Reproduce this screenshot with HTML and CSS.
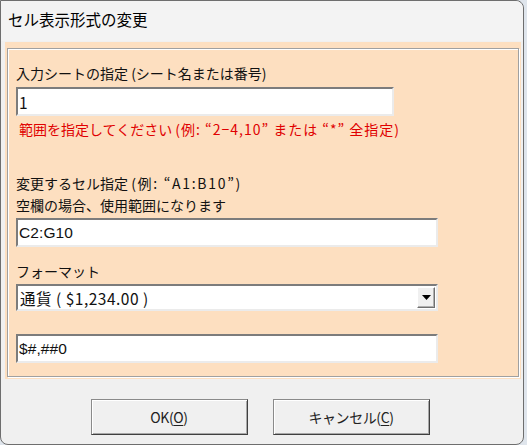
FILE: index.html
```html
<!DOCTYPE html>
<html lang="ja">
<head>
<meta charset="utf-8">
<link rel="stylesheet" href="styles.css">
</head>
<body>
<div class="window">
  <div class="titlebar">セル表示形式の変更</div>
  <div class="frame">
    <div class="group">
      <div class="label l1">入力シートの指定 (シート名または番号)</div>
      <div class="input w-short"><span class="val big">1</span></div>
      <div class="label note">範囲を指定してください <span class="lat-a">(例: “2−4,10” または “*” 全指定)</span></div>
      <div class="label l2">変更するセル指定 <span class="lat-b">(例: “A1:B10”)</span></div>
      <div class="label l3">空欄の場合、使用範囲になります</div>
      <div class="input w-long"><span class="val">C2:G10</span></div>
      <div class="label l4">フォーマット</div>
      <div class="combo w-long">
        <span class="val big wide">通貨 ( $1,234.00 )</span>
        <span class="drop"><svg width="9" height="5" viewBox="0 0 9 5"><path d="M0 0H9L4.5 5Z" fill="#000"/></svg></span>
      </div>
      <div class="input w-long i3"><span class="val">$#,##0</span></div>
    </div>
  </div>
  <div class="buttons">
    <div class="btn btn-ok">OK(<u>O</u>)</div>
    <div class="btn btn-cancel">キャンセル(<u>C</u>)</div>
  </div>
</div>
</body>
</html>
```

FILE: styles.css
```css
html, body {
  margin: 0;
  padding: 0;
}
body {
  width: 527px;
  height: 445px;
  background: #dfe5ec;
  font-family: "Noto Sans CJK JP", "Noto Sans", sans-serif;
  color: #000;
  overflow: hidden;
}
.window {
  box-sizing: border-box;
  width: 524px;
  height: 445px;
  background: #f0f0f0;
  border: 1px solid #6e6e6e;
  border-radius: 0 8px 8px 8px;
  display: flex;
  flex-direction: column;
}
.titlebar {
  height: 40px;
  line-height: 36px;
  padding-left: 7px;
  font-size: 15.5px;
  background: #f3f3f3;
  border-radius: 0 8px 0 0;
}
.frame {
  margin: 1px 2px 0 4px;
  height: 337px;
  box-sizing: border-box;
  padding: 6px 2px 2px 2px;
  background: #fddfc0;
}
.group {
  box-sizing: border-box;
  height: 329px;
  border: 1px solid #a0a0a0;
  box-shadow: inset 1px 1px 0 #fff, 1px 1px 0 #fff;
  padding: 14px 8px 0 8px;
  display: flex;
  flex-direction: column;
  align-items: flex-start;
}
.label {
  font-size: 14px;
  line-height: 20px;
  white-space: nowrap;
  color: #111;
}
.l1 { margin-bottom: 4px; }
.note {
  color: #e00000;
  margin: 3px 0 0 3px;
}
.lat-a { letter-spacing: 1px; }
.lat-b { letter-spacing: 1.7px; }
.l2 {
  margin-top: 33px;
  line-height: 22px;
}
.l3 {
  line-height: 22px;
  margin-bottom: 2px;
}
.l4 {
  margin-top: 14px;
  margin-bottom: 3px;
}
.input, .combo {
  box-sizing: border-box;
  height: 29px;
  background: #fff;
  border-top: 2px solid #7c7c7c;
  border-left: 2px solid #7c7c7c;
  border-bottom: 2px solid #ebebeb;
  border-right: 2px solid #ebebeb;
  display: flex;
  align-items: center;
  padding-left: 1px;
}
.combo {
  height: 27px;
  padding-left: 2px;
}
.w-short { width: 378px; }
.w-long { width: 422px; }
.i3 { margin-top: 23px; }
.val {
  font-family: "Liberation Sans", sans-serif;
  font-size: 15.5px;
  letter-spacing: 0.1px;
  color: #111;
}
.val.big {
  font-family: "Noto Sans CJK JP", sans-serif;
  font-size: 15.5px;
  letter-spacing: 0;
}
.val.big.wide { letter-spacing: 0.5px; }
.drop {
  margin-left: auto;
  margin-right: 1px;
  width: 18px;
  height: 21px;
  box-sizing: border-box;
  background: #f0f0f0;
  border: 1px solid #fff;
  border-right-color: #707070;
  border-bottom-color: #707070;
  box-shadow: inset -1px -1px 0 #b0b0b0;
  display: flex;
  align-items: center;
  justify-content: center;
}
.buttons {
  display: flex;
  justify-content: center;
  gap: 25px;
  margin-top: 20px;
  padding-right: 4px;
}
.btn {
  box-sizing: border-box;
  width: 157px;
  height: 36px;
  background: #f0f0f0;
  border: 1px solid #8a8a8a;
  border-right-color: #404040;
  border-bottom-color: #404040;
  box-shadow: inset 1px 1px 0 #fff, inset -1px -1px 0 #a8a8a8;
  display: flex;
  align-items: center;
  justify-content: center;
  font-size: 14px;
  color: #222;
  letter-spacing: -0.4px;
}
.btn u {
  text-underline-offset: 2px;
}
```
